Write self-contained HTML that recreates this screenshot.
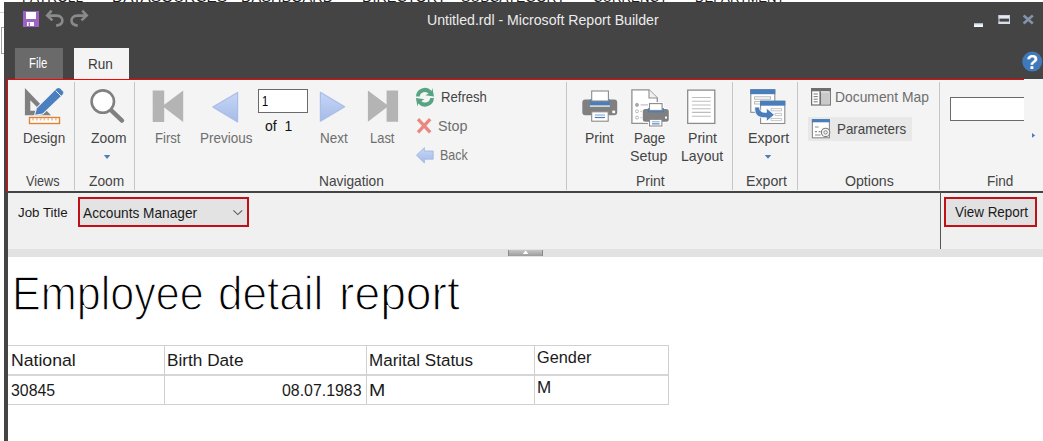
<!DOCTYPE html>
<html>
<head>
<meta charset="utf-8">
<title>Untitled.rdl - Microsoft Report Builder</title>
<style>
html,body{margin:0;padding:0;}
body{width:1043px;height:441px;overflow:hidden;background:#fff;position:relative;font-family:"Liberation Sans",sans-serif;color:#222;}
.abs{position:absolute;}
.t{position:absolute;white-space:nowrap;line-height:1;transform-origin:0 0;}
#bgtext{left:22px;top:-9.9px;height:14px;overflow:hidden;font-size:14px;color:#222;letter-spacing:1.5px;word-spacing:28px;}
#titlebar{left:4px;top:2px;width:1039px;height:77px;background:#444;}
#leftedge{left:4px;top:2px;width:4px;height:439px;background:#444;}
#ribbon{left:8px;top:79px;width:1035px;height:112px;background:#f4f4f4;}
#redtop{left:7px;top:79px;width:1017px;height:1px;background:#ff0000;}
#redleft{left:7px;top:79px;width:1px;height:113px;background:#ff0000;}
#ribbonline{left:8px;top:191px;width:1035px;height:2px;background:#444;}
#params{left:8px;top:193px;width:1035px;height:56px;background:#f0f0f0;}
#splitter{left:8px;top:249px;width:1035px;height:8px;background:#e2e2e2;}
#splitbtn{left:508px;top:250px;width:35px;height:6px;background:linear-gradient(#c6c6c6,#9c9c9c);box-shadow:inset 1px 0 #8a8a8a,inset -1px 0 #8a8a8a;}
#filetab{left:15px;top:48px;width:48px;height:31px;background:#6a6a6a;}
#runtab{left:74px;top:48px;width:55px;height:31px;background:#f4f4f4;}
.sep{position:absolute;top:82px;width:1px;height:108px;background:#c6c6c6;}
</style>
</head>
<body>
<div class="t" id="bg1" style="left:22.27px;top:-10px;font-size:14px;color:#1a1a1a;transform:scaleX(0.9754);">PAYROLL</div>
<div class="t" id="bg2" style="left:112.15px;top:-10px;font-size:14px;color:#1a1a1a;transform:scaleX(1.1019);">DATASOURCES</div>
<div class="t" id="bg3" style="left:241.21px;top:-10px;font-size:14px;color:#1a1a1a;transform:scaleX(1.0402);">DASHBOARD</div>
<div class="t" id="bg4" style="left:362.22px;top:-10px;font-size:14px;color:#1a1a1a;transform:scaleX(1.0312);">DIRECTORY</div>
<div class="t" id="bg5" style="left:461.26px;top:-10px;font-size:14px;color:#1a1a1a;transform:scaleX(0.9857);">SUBCATEGORY</div>
<div class="t" id="bg6" style="left:593.31px;top:-10px;font-size:14px;color:#1a1a1a;transform:scaleX(0.9423);">CURRENCY</div>
<div class="t" id="bg7" style="left:695.31px;top:-10px;font-size:14px;color:#1a1a1a;transform:scaleX(0.9415);">DEPARTMENT</div>
<div class="abs" style="left:0;top:12px;width:4px;height:1px;background:#d0d0d0;"></div>
<div class="abs" style="left:1px;top:27px;width:4px;height:27px;border:1px solid #a0a0a0;border-right:none;box-sizing:border-box;"></div>
<div class="abs" id="titlebar"></div>
<div class="abs" id="leftedge"></div>
<div class="abs" id="filetab"></div>
<div class="abs" id="runtab"></div>
<div class="abs" id="ribbon"></div>
<div class="abs" id="redtop"></div>
<div class="abs" id="redleft"></div>
<div class="abs" id="ribbonline"></div>
<div class="abs" id="params"></div>
<div class="abs" id="splitter"></div>
<div class="abs" id="splitbtn"></div>

<div class="sep" style="left:74px"></div>
<div class="sep" style="left:134px"></div>
<div class="sep" style="left:566px"></div>
<div class="sep" style="left:732px"></div>
<div class="sep" style="left:797px"></div>
<div class="sep" style="left:939px"></div>

<div class="abs" id="paramhl" style="left:808px;top:117px;width:104px;height:24px;background:#e8e8e8;"></div>
<div class="abs" id="pagebox" style="left:258px;top:89px;width:50px;height:24px;background:#fff;border:1px solid #6a6a6a;box-sizing:border-box;"></div>
<div class="abs" id="findbox" style="left:950px;top:97px;width:74px;height:24px;background:#fff;border:1px solid #6a6a6a;border-right:none;box-sizing:border-box;"></div>

<div class="abs" id="combo" style="left:78px;top:197px;width:171px;height:30px;background:#e3e3e3;border:2px solid #c00f16;box-sizing:border-box;"></div>
<div class="abs" id="vline" style="left:940px;top:192px;width:1px;height:57px;background:#555;"></div>
<div class="abs" id="viewbtn" style="left:944px;top:197px;width:93px;height:30px;background:#e1e1e1;border:2px solid #c00f16;box-sizing:border-box;"></div>

<div class="abs" id="tbl" style="left:8px;top:345px;width:661px;height:60px;border:1px solid #d0d0d0;border-left:none;box-sizing:border-box;"></div>
<div class="abs" style="left:8px;top:374px;width:660px;height:2px;background:#d6d6d6;"></div>
<div class="abs" style="left:164px;top:345px;width:1px;height:60px;background:#d0d0d0;"></div>
<div class="abs" style="left:366px;top:345px;width:1px;height:60px;background:#d0d0d0;"></div>
<div class="abs" style="left:534px;top:345px;width:1px;height:60px;background:#d0d0d0;"></div>

<div class="t" id="title" style="left:426.78px;top:13px;font-size:14.5px;color:#ececec;transform:scaleX(0.9743);">Untitled.rdl - Microsoft Report Builder</div>
<div class="t" id="tfile" style="left:28.97px;top:56px;font-size:14.5px;color:#ffffff;transform:scaleX(0.7818);">File</div>
<div class="t" id="trun" style="left:87.91px;top:57px;font-size:14.5px;color:#3a3a3a;transform:scaleX(0.9360);">Run</div>
<div class="t" id="ldesign" style="left:23.02px;top:131px;font-size:14.5px;color:#444;transform:scaleX(0.9349);">Design</div>
<div class="t" id="lzoom" style="left:90.55px;top:131px;font-size:14.5px;color:#444;transform:scaleX(0.9556);">Zoom</div>
<div class="t" id="lfirst" style="left:155.25px;top:131px;font-size:14.5px;color:#6e6e6e;transform:scaleX(0.9037);">First</div>
<div class="t" id="lprev" style="left:200.12px;top:131px;font-size:14.5px;color:#6e6e6e;transform:scaleX(0.9291);">Previous</div>
<div class="t" id="lof" style="left:265.28px;top:119px;font-size:14.5px;color:#111;transform:scaleX(0.9667);">of&nbsp;&nbsp;1</div>
<div class="t" id="lnext" style="left:319.72px;top:131px;font-size:14.5px;color:#6e6e6e;transform:scaleX(0.9276);">Next</div>
<div class="t" id="llast" style="left:369.86px;top:131px;font-size:14.5px;color:#6e6e6e;transform:scaleX(0.8923);">Last</div>
<div class="t" id="lrefresh" style="left:441.05px;top:90px;font-size:14.5px;color:#444;transform:scaleX(0.9041);">Refresh</div>
<div class="t" id="lstop" style="left:438.26px;top:119px;font-size:14.5px;color:#6e6e6e;transform:scaleX(0.9893);">Stop</div>
<div class="t" id="lback" style="left:440.29px;top:148px;font-size:14.5px;color:#6e6e6e;transform:scaleX(0.8581);">Back</div>
<div class="t" id="lprint" style="left:584.89px;top:131px;font-size:14.5px;color:#444;transform:scaleX(0.9621);">Print</div>
<div class="t" id="lpage" style="left:633.63px;top:131px;font-size:14.5px;color:#444;transform:scaleX(0.9219);">Page</div>
<div class="t" id="lsetup" style="left:630.16px;top:149px;font-size:14.5px;color:#444;transform:scaleX(0.9861);">Setup</div>
<div class="t" id="lprint2" style="left:687.58px;top:131px;font-size:14.5px;color:#444;transform:scaleX(0.9724);">Print</div>
<div class="t" id="llayout" style="left:681.08px;top:149px;font-size:14.5px;color:#444;transform:scaleX(0.9690);">Layout</div>
<div class="t" id="lexport" style="left:747.57px;top:131px;font-size:14.5px;color:#444;transform:scaleX(0.9805);">Export</div>
<div class="t" id="ldocmap" style="left:834.89px;top:90px;font-size:14.5px;color:#6e6e6e;transform:scaleX(0.9557);">Document Map</div>
<div class="t" id="lparams" style="left:836.83px;top:122px;font-size:14.5px;color:#444;transform:scaleX(0.9230);">Parameters</div>
<div class="t" id="gviews" style="left:25.75px;top:174px;font-size:14.5px;color:#444;transform:scaleX(0.8711);">Views</div>
<div class="t" id="gzoom" style="left:89.05px;top:174px;font-size:14.5px;color:#444;transform:scaleX(0.9500);">Zoom</div>
<div class="t" id="gnav" style="left:318.90px;top:174px;font-size:14.5px;color:#444;transform:scaleX(0.9463);">Navigation</div>
<div class="t" id="gprint" style="left:635.69px;top:174px;font-size:14.5px;color:#444;transform:scaleX(0.9621);">Print</div>
<div class="t" id="gexport" style="left:745.67px;top:174px;font-size:14.5px;color:#444;transform:scaleX(0.9756);">Export</div>
<div class="t" id="goptions" style="left:845.27px;top:174px;font-size:14.5px;color:#444;transform:scaleX(0.9755);">Options</div>
<div class="t" id="gfind" style="left:986.72px;top:174px;font-size:14.5px;color:#444;transform:scaleX(0.9346);">Find</div>
<div class="t" id="pagenum" style="left:261.97px;top:94px;font-size:14px;color:#000;transform:scaleX(0.7833);">1</div>
<div class="t" id="jobtitle" style="left:18.25px;top:206px;font-size:13.5px;color:#1a1a1a;transform:scaleX(0.9860);">Job Title</div>
<div class="t" id="combotext" style="left:82.55px;top:206px;font-size:14.5px;color:#1a1a1a;transform:scaleX(0.9438);">Accounts Manager</div>
<div class="t" id="viewtext" style="left:954.55px;top:205px;font-size:14px;color:#1a1a1a;transform:scaleX(0.9605);">View Report</div>
<div class="t" id="heading" style="left:11.73px;top:269px;font-size:49px;color:#000;transform:scaleX(0.8797);-webkit-text-stroke:1.35px #fff;">Employee</div>
<div class="t" id="heading2" style="left:218.15px;top:269px;font-size:49px;color:#000;transform:scaleX(0.8991);-webkit-text-stroke:1.35px #fff;">detail</div>
<div class="t" id="heading3" style="left:339.02px;top:269px;font-size:49px;color:#000;transform:scaleX(0.9440);-webkit-text-stroke:1.35px #fff;">report</div>
<div class="t" id="c1" style="left:11.17px;top:352px;font-size:16.3px;color:#1a1a1a;transform:scaleX(1.0828);">National</div>
<div class="t" id="c2" style="left:166.79px;top:352px;font-size:16.3px;color:#1a1a1a;transform:scaleX(1.0563);">Birth Date</div>
<div class="t" id="c3" style="left:368.90px;top:352px;font-size:16.3px;color:#1a1a1a;transform:scaleX(1.0459);">Marital Status</div>
<div class="t" id="c4" style="left:536.65px;top:349px;font-size:16.3px;color:#1a1a1a;transform:scaleX(1.0019);">Gender</div>
<div class="t" id="d1" style="left:11.28px;top:382px;font-size:16.3px;color:#1a1a1a;transform:scaleX(0.9750);">30845</div>
<div class="t" id="d2" style="left:281.67px;top:382px;font-size:16.3px;color:#1a1a1a;transform:scaleX(0.9763);">08.07.1983</div>
<div class="t" id="d3" style="left:368.75px;top:382px;font-size:16.3px;color:#1a1a1a;transform:scaleX(1.2000);">M</div>
<div class="t" id="d4" style="left:536.60px;top:379px;font-size:16.3px;color:#1a1a1a;transform:scaleX(1.0455);">M</div>

<svg class="abs" id="icons" style="left:0;top:0;" width="1043" height="441" viewBox="0 0 1043 441">
<defs>
<linearGradient id="gb" x1="0" y1="0" x2="0" y2="1"><stop offset="0" stop-color="#c6d6f5"/><stop offset="1" stop-color="#a6bbe8"/></linearGradient>
<linearGradient id="gw" x1="0" y1="0" x2="0" y2="1"><stop offset="0" stop-color="#93a3c2"/><stop offset="0.45" stop-color="#e8edf6"/><stop offset="1" stop-color="#ffffff"/></linearGradient>
</defs>
<!-- quick access: save / undo / redo -->
<rect x="23" y="11" width="16" height="16" fill="#9d62c2"/>
<rect x="26" y="12" width="10" height="7" fill="#fff"/>
<rect x="27" y="22" width="7" height="4" fill="#fff"/>
<rect x="28.6" y="22.4" width="1.3" height="3.6" fill="#9d62c2"/>
<g fill="none" stroke="#8a8a8a" stroke-width="2.6" stroke-linecap="butt" stroke-linejoin="miter">
<path d="M51.6 10.6 L47.2 15.4 L52.4 20.4"/>
<path d="M48 15.6 H56.5 C61 15.6 62.4 18.6 62.4 20.6 C62.4 23 60.6 25.2 56.2 25.6"/>
<path d="M82.3 10.6 L86.7 15.4 L81.5 20.4"/>
<path d="M85.9 15.6 H77.4 C72.9 15.6 71.5 18.6 71.5 20.6 C71.5 23 73.3 25.2 77.7 25.6"/>
</g>
<!-- window buttons -->
<rect x="974" y="23" width="9" height="4" fill="url(#gw)"/>
<rect x="998.5" y="15" width="11.5" height="3.6" fill="#e4e9f2"/>
<rect x="999" y="15.5" width="10.5" height="8" fill="none" stroke="#c9d2e2" stroke-width="1"/>
<rect x="998.5" y="21.6" width="11.5" height="2.4" fill="#d7deea"/>
<path d="M1023.6 15.6 L1032.8 23.6 M1032.8 15.6 L1023.6 23.6" stroke="#8492aa" stroke-width="2.6" fill="none"/>
<!-- help -->
<circle cx="1032.2" cy="61.6" r="10" fill="#3f79b9"/>
<text x="1032.3" y="69" font-family="Liberation Sans, sans-serif" font-weight="bold" font-size="19.5" fill="#fff" text-anchor="middle">?</text>

<!-- Design icon -->
<path d="M24.9 88 L24.9 115.2 L51 115.2 Z M30.3 100.2 L30.3 110.8 L40.6 110.8 Z" fill="#808080" fill-rule="evenodd"/>
<path d="M35.2 114.8 L37 108.2 L56.6 88.8 Q58.5 87.2 60.4 88.8 L62.8 91.2 Q64.2 92.8 62.6 94.4 L42.6 113.6 Z" fill="#4a80c0" stroke="#f4f4f4" stroke-width="2"/>
<path d="M35.2 114.8 L37 108.2 L56.6 88.8 Q58.5 87.2 60.4 88.8 L62.8 91.2 Q64.2 92.8 62.6 94.4 L42.6 113.6 Z" fill="#4a80c0"/>
<path d="M55.6 90.6 L61 96" stroke="#f4f4f4" stroke-width="1" fill="none"/>
<rect x="29.5" y="117.5" width="30" height="6" fill="#fff" stroke="#e08434" stroke-width="1.4"/>
<path d="M33 118 v2.6 M36.8 118 v2.6 M40.6 118 v2.6 M44.4 118 v2.6 M48.2 118 v2.6 M52 118 v2.6 M55.8 118 v2.6" stroke="#f2bf94" stroke-width="1.8" fill="none"/>
<!-- Zoom icon -->
<path d="M110.7 109.8 L122 120.6" stroke="#808080" stroke-width="4.4" stroke-linecap="round" fill="none"/>
<circle cx="102.8" cy="101.6" r="11.2" fill="#fff" stroke="#808080" stroke-width="2.6"/>
<path d="M103.9 155 h6.4 l-3.2 4 z" fill="#4a7ebb"/>
<!-- First -->
<path d="M152.7 90.6 H164.2 V104.8 L183.2 90.6 V121.9 L164.2 107.6 V121.9 H152.7 Z" fill="#b4b4b4"/>
<!-- Previous -->
<path d="M212.8 106.9 L237.6 92.4 V121.9 Z" fill="url(#gb)" stroke="#a9bdea" stroke-width="1.2" stroke-linejoin="round"/>
<!-- Next -->
<path d="M344.7 106.7 L320.4 92.3 V121.2 Z" fill="url(#gb)" stroke="#a9bdea" stroke-width="1.2" stroke-linejoin="round"/>
<!-- Last -->
<path d="M398.1 90.4 H386.6 V104.6 L367.9 90.4 V121.7 L386.6 107.4 V121.7 H398.1 Z" fill="#b4b4b4"/>
<!-- Refresh -->
<g id="rf" fill="#58a384">
<path d="M416 96.6 A8.9 8.9 0 0 1 431.6 91 L432.4 88 L434 96.6 L425.4 95.2 L428.6 93.6 A5.2 5.2 0 0 0 419.7 96.6 Z"/>
<path d="M416 96.6 A8.9 8.9 0 0 1 431.6 91 L432.4 88 L434 96.6 L425.4 95.2 L428.6 93.6 A5.2 5.2 0 0 0 419.7 96.6 Z" transform="rotate(180 424.95 97.25)"/>
</g>
<!-- Stop -->
<path d="M418 119.2 L430.2 132.4 M430.2 119.2 L418 132.4" stroke="#e98880" stroke-width="3.3" fill="none" stroke-linecap="butt"/>
<!-- Back -->
<path d="M416.4 155.2 L424.4 147.6 V151 H433.2 V159.2 H424.4 V163 Z" fill="url(#gb)" stroke="#9db6e8" stroke-width="0.8" stroke-linejoin="round"/>

<!-- Print icon -->
<rect x="582.3" y="99.4" width="34.9" height="15.9" rx="3" fill="#808080"/>
<rect x="589.9" y="99.4" width="20" height="6" fill="#4a7ebb"/>
<rect x="589.9" y="105.4" width="20" height="1.4" fill="#e8e8e8"/>
<rect x="591.7" y="91" width="16.7" height="10" fill="#fff" stroke="#8a8a8a" stroke-width="1.1"/>
<rect x="591.7" y="111.8" width="16.5" height="9.4" fill="#fff" stroke="#8a8a8a" stroke-width="1.1"/>
<rect x="594.8" y="114.4" width="10.2" height="1.2" fill="#8fb0dc"/>
<rect x="594.8" y="116.9" width="10.2" height="1.2" fill="#4a7ebb"/>
<rect x="612.3" y="110.6" width="2.8" height="2.6" fill="#fff"/>
<!-- Page setup icon -->
<path d="M631.9 89.8 H649 L657.3 98 V123.3 H631.9 Z" fill="#fff" stroke="#909090" stroke-width="1.3"/>
<path d="M649 89.8 V98 H657.3" fill="#f0f0f0" stroke="#909090" stroke-width="1.1"/>
<circle cx="637" cy="104.9" r="1.6" fill="#aaa" stroke="#999" stroke-width="0.6"/>
<circle cx="637" cy="111.3" r="1.5" fill="#fff" stroke="#aaa" stroke-width="0.8"/>
<circle cx="637" cy="117.6" r="1.5" fill="#fff" stroke="#aaa" stroke-width="0.8"/>
<path d="M640.5 104.9 H648 M640.5 111.3 H643 M640.5 117.6 H643" stroke="#c4c4c4" stroke-width="1.2"/>
<rect x="642.8" y="109" width="26" height="12.7" rx="2.5" fill="#fff" stroke="#fff" stroke-width="2"/><rect x="649.5" y="103.6" width="12.6" height="6.8" fill="#fff" stroke="#fff" stroke-width="3"/><rect x="649.5" y="119.4" width="12.4" height="6.6" fill="#fff" stroke="#fff" stroke-width="3"/>
<rect x="642.8" y="109" width="26" height="12.7" rx="2.5" fill="#808080"/>
<rect x="647.8" y="108.2" width="16.2" height="4.2" fill="#4a7ebb"/>
<rect x="649.5" y="103.6" width="12.6" height="6.8" fill="#fff" stroke="#8a8a8a" stroke-width="1.1"/>
<rect x="649.5" y="119.4" width="12.4" height="6.6" fill="#fff" stroke="#8a8a8a" stroke-width="1.1"/>
<rect x="652" y="121.2" width="7.6" height="1.1" fill="#8fb0dc"/>
<rect x="652" y="123.3" width="7.6" height="1.1" fill="#4a7ebb"/>
<rect x="665" y="116.6" width="2" height="2" fill="#fff"/>
<!-- Print layout icon -->
<rect x="687.7" y="90.1" width="27.1" height="33.3" fill="#fff" stroke="#8c8c8c" stroke-width="1.3"/>
<path d="M691.9 97.5 H710.7 M691.9 101.3 H710.7 M691.9 105 H710.7 M691.9 108.7 H710.7 M691.9 112.4 H710.7 M691.9 116.2 H710.7" stroke="#bdbdbd" stroke-width="1.1"/>
<!-- Export icon -->
<rect x="750.8" y="89.8" width="24" height="22.5" fill="#fff" stroke="#8c8c8c" stroke-width="1.1"/>
<rect x="750.2" y="89.2" width="25.1" height="5" fill="#4a7ebb"/>
<rect x="754.6" y="96.8" width="16" height="2.4" fill="#fff" stroke="#b0b0b0" stroke-width="0.9"/>
<rect x="754.6" y="101.6" width="8" height="2.4" fill="#fff" stroke="#b0b0b0" stroke-width="0.9"/>
<rect x="760.6" y="101.3" width="24.2" height="22.2" fill="#fff" stroke="#8c8c8c" stroke-width="1.1"/>
<rect x="760" y="100.7" width="25.3" height="5" fill="#4a7ebb"/>
<path d="M771 108.6 H781.5 V110.8 H771 Z M775 113.4 H781.5 V115.6 H775 Z M771 118.4 H781.5 V120.6 H771 Z" fill="#fff" stroke="#b8b8b8" stroke-width="0.8"/>
<path d="M754.6 107 H759.6 C759.6 111.4 761.4 112.4 766.4 112.4 V108 L774.4 114.8 L766.4 121.6 V117.8 C758 118 754.6 115.4 754.6 107 Z" fill="#4a7ebb" stroke="#fff" stroke-width="0.8"/>
<path d="M764.8 155 h6.4 l-3.2 3.8 z" fill="#4a7ebb"/>
<!-- Document map icon -->
<rect x="811.6" y="88.6" width="18.7" height="16.4" fill="#fff" stroke="#6e6e6e" stroke-width="1.2"/>
<rect x="811.1" y="88.1" width="19.7" height="3.2" fill="#6e6e6e"/>
<rect x="819.4" y="91.3" width="1.6" height="13.6" fill="#6e6e6e"/>
<rect x="821" y="92.3" width="8.6" height="12" fill="#c9c9c9"/>
<path d="M813.6 94 H817.8 M813.6 96.6 H817.8 M813.6 99.2 H817.8 M813.6 101.8 H817.8" stroke="#7a7a7a" stroke-width="1"/>
<!-- Parameters icon -->
<rect x="812.4" y="119.6" width="17" height="18.2" fill="#fff" stroke="#8a8a8a" stroke-width="1.1"/>
<rect x="811.9" y="119.1" width="18" height="3.2" fill="#4a7ebb"/>
<path d="M815 127 H818.6 M815 131.6 H817 M818.6 131.6 H820.6 M815 135 H820.6" stroke="#8a8a8a" stroke-width="1.1"/>
<circle cx="825.6" cy="132.4" r="4.2" fill="#f4f4f4" stroke="#7c7c7c" stroke-width="1.1"/>
<circle cx="825.6" cy="132.4" r="1.7" fill="none" stroke="#7c7c7c" stroke-width="0.9"/>
<!-- find arrow -->
<path d="M1032 133 L1035.2 135.4 L1032 137.8 Z" fill="#4a7ebb"/>
<!-- combo chevron -->
<path d="M233.4 210.4 L237.8 214.6 L242.2 210.4" fill="none" stroke="#5c5c5c" stroke-width="1.1"/>
<!-- splitter arrow -->
<path d="M522.8 254 L525.6 250.6 L528.4 254 Z" fill="#fff"/>
</svg>
</body>
</html>
